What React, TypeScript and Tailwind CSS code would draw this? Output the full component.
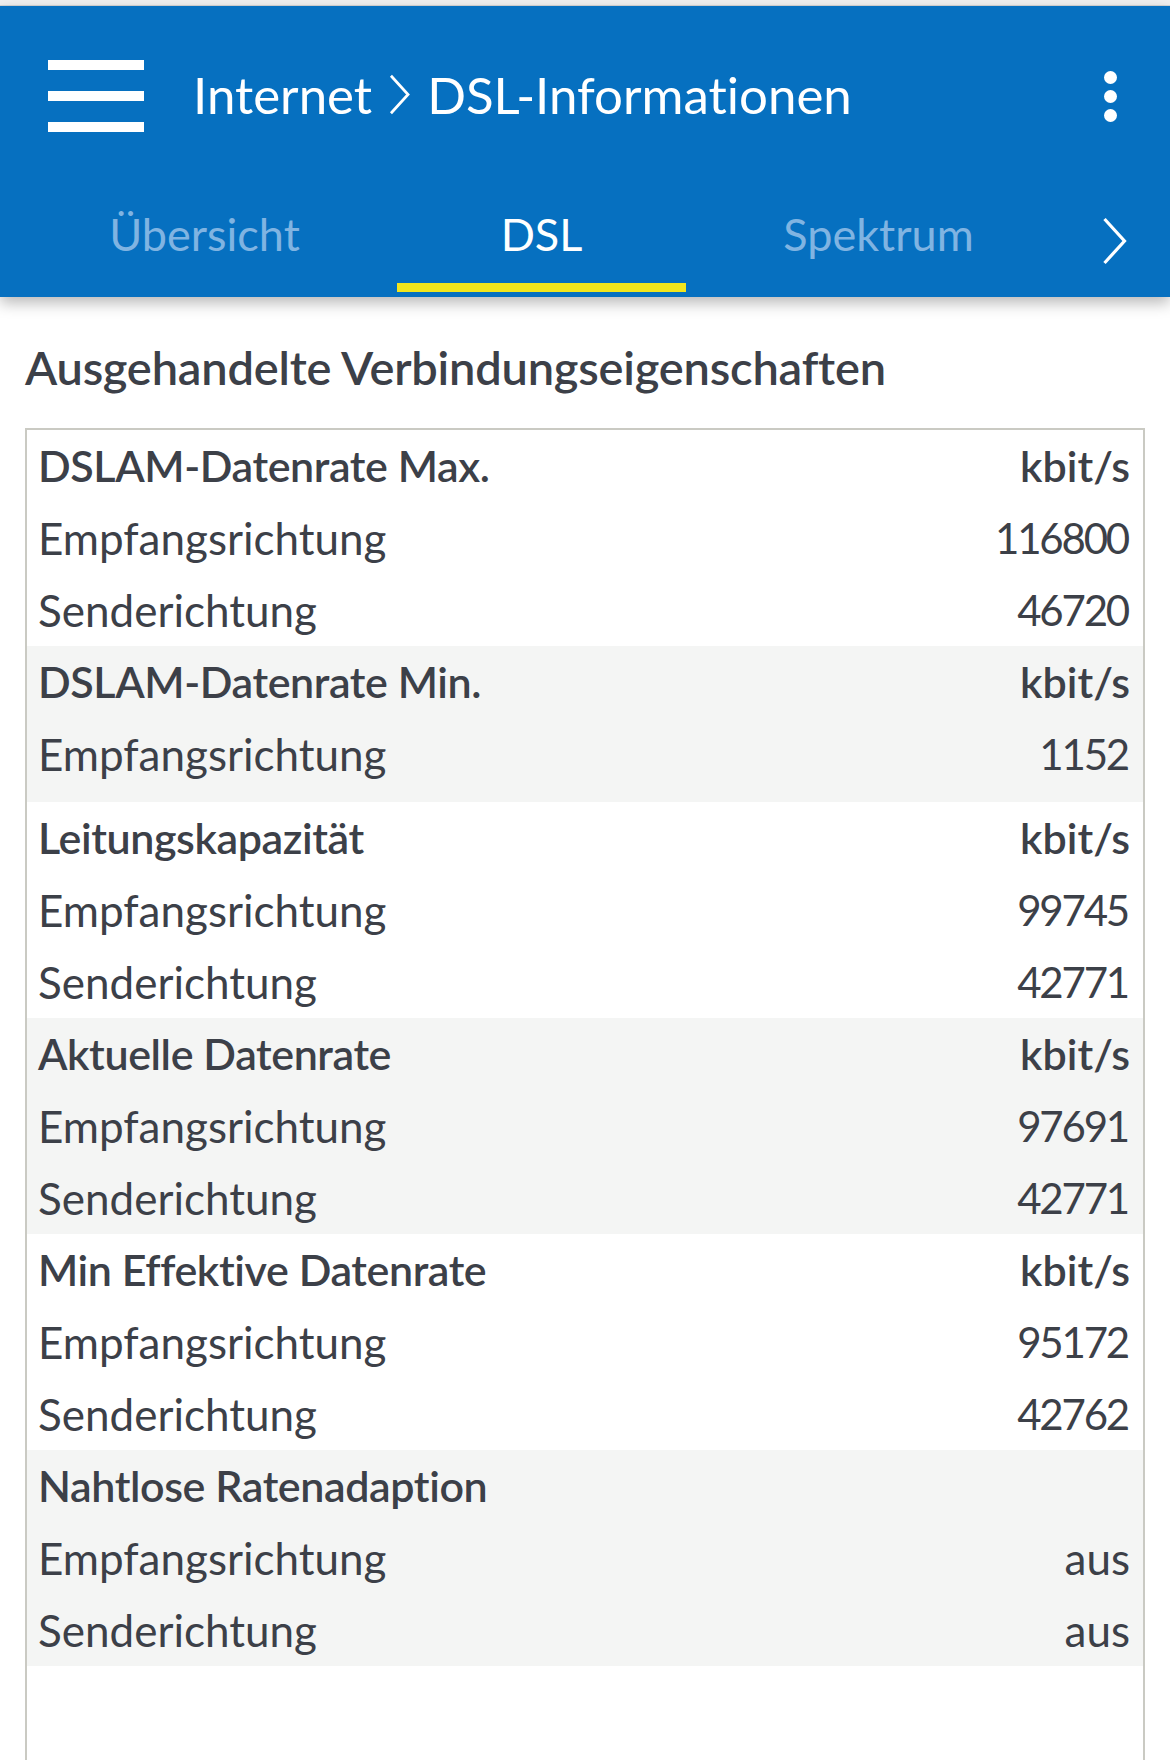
import React from 'react'

type Row = { label: string; value: string }
type Group = { title: string; unit: string; rows: Row[]; shade: boolean; extra?: boolean }

const groups: Group[] = [
  {
    title: 'DSLAM-Datenrate Max.',
    unit: 'kbit/s',
    shade: false,
    rows: [
      { label: 'Empfangsrichtung', value: '116800' },
      { label: 'Senderichtung', value: '46720' },
    ],
  },
  {
    title: 'DSLAM-Datenrate Min.',
    unit: 'kbit/s',
    shade: true,
    extra: true,
    rows: [{ label: 'Empfangsrichtung', value: '1152' }],
  },
  {
    title: 'Leitungskapazität',
    unit: 'kbit/s',
    shade: false,
    rows: [
      { label: 'Empfangsrichtung', value: '99745' },
      { label: 'Senderichtung', value: '42771' },
    ],
  },
  {
    title: 'Aktuelle Datenrate',
    unit: 'kbit/s',
    shade: true,
    rows: [
      { label: 'Empfangsrichtung', value: '97691' },
      { label: 'Senderichtung', value: '42771' },
    ],
  },
  {
    title: 'Min Effektive Datenrate',
    unit: 'kbit/s',
    shade: false,
    rows: [
      { label: 'Empfangsrichtung', value: '95172' },
      { label: 'Senderichtung', value: '42762' },
    ],
  },
  {
    title: 'Nahtlose Ratenadaption',
    unit: '',
    shade: true,
    rows: [
      { label: 'Empfangsrichtung', value: 'aus' },
      { label: 'Senderichtung', value: 'aus' },
    ],
  },
]

function Chevron({ className }: { className: string }) {
  return (
    <svg viewBox="0 0 24 48" className={className} fill="none" stroke="white" strokeWidth="3.2">
      <path d="M2 2 L22 24 L2 46" />
    </svg>
  )
}

export default function App() {
  return (
    <div className="w-[1170px] h-[1760px] overflow-hidden bg-white font-['Lato',sans-serif] [font-variant-ligatures:none] text-[#3c4048]">
      {/* Statusleiste */}
      <div className="h-[6px] bg-[#f0f0f0] border-b border-[#d6d6d6]" />

      {/* Kopf */}
      <div className="relative z-10 bg-[#0670c0] shadow-[0_6px_14px_rgba(0,0,0,0.28)]">
        <div className="h-[180px] flex items-center pl-[48px] pr-[53px]">
          <div className="flex flex-col gap-[21px] w-[96px]">
            <span className="block h-[10px] bg-white" />
            <span className="block h-[10px] bg-white" />
            <span className="block h-[10px] bg-white" />
          </div>
          <div className="ml-[49px] mb-[4px] flex items-center text-white text-[51px] leading-none">
            <span>Internet</span>
            <Chevron className="w-[21px] h-[41px] mx-[17px]" />
            <span>DSL-Informationen</span>
          </div>
          <div className="ml-auto flex flex-col gap-[6px] items-center">
            <span className="block w-[13px] h-[13px] rounded-full bg-white" />
            <span className="block w-[13px] h-[13px] rounded-full bg-white" />
            <span className="block w-[13px] h-[13px] rounded-full bg-white" />
          </div>
        </div>

        <div className="h-[111px] flex pl-[36px]">
          {['Übersicht', 'DSL', 'Spektrum'].map((t, i) => (
            <div key={t} className="w-[337px] flex flex-col">
              <div
                className={
                  'h-[97px] flex items-center justify-center text-[45px] leading-none ' +
                  (i === 1 ? 'text-white' : 'text-[#80b4e2]')
                }
              >
                {t}
              </div>
              <div className={'mx-[24px] h-[9px] ' + (i === 1 ? 'bg-[#f2e51d]' : '')} />
            </div>
          ))}
          <div className="flex-1 flex items-start pt-[31px] pl-[55px]">
            <Chevron className="w-[25px] h-[48px]" />
          </div>
        </div>
      </div>

      {/* Inhalt */}
      <div className="px-[25px]">
        <h2 className="pt-[40px] text-[47px] font-semibold leading-[60px] tracking-[-0.2px]">
          Ausgehandelte Verbindungseigenschaften
        </h2>

        <div className="mt-[31px] border-2 border-[#cacac3] h-[1400px]">
          {groups.map(g => (
            <div key={g.title} className={(g.shade ? 'bg-[#f4f5f4] ' : 'bg-white ') + (g.extra ? 'pb-[12px]' : '')}>
              <div className="h-[72px] flex items-center justify-between pl-[11px] pr-[13px] text-[43px] font-semibold">
                <span className="tracking-[-0.4px]">{g.title}</span>
                <span>{g.unit}</span>
              </div>
              {g.rows.map(r => (
                <div key={r.label} className="h-[72px] flex items-center justify-between pl-[11px] pr-[13px] text-[44px]">
                  <span>{r.label}</span>
                  <span className={/^\d+$/.test(r.value) ? 'text-[42px] tracking-[-2.2px] pr-[2px]' : ''}>{r.value}</span>
                </div>
              ))}
            </div>
          ))}
        </div>
      </div>
    </div>
  )
}
